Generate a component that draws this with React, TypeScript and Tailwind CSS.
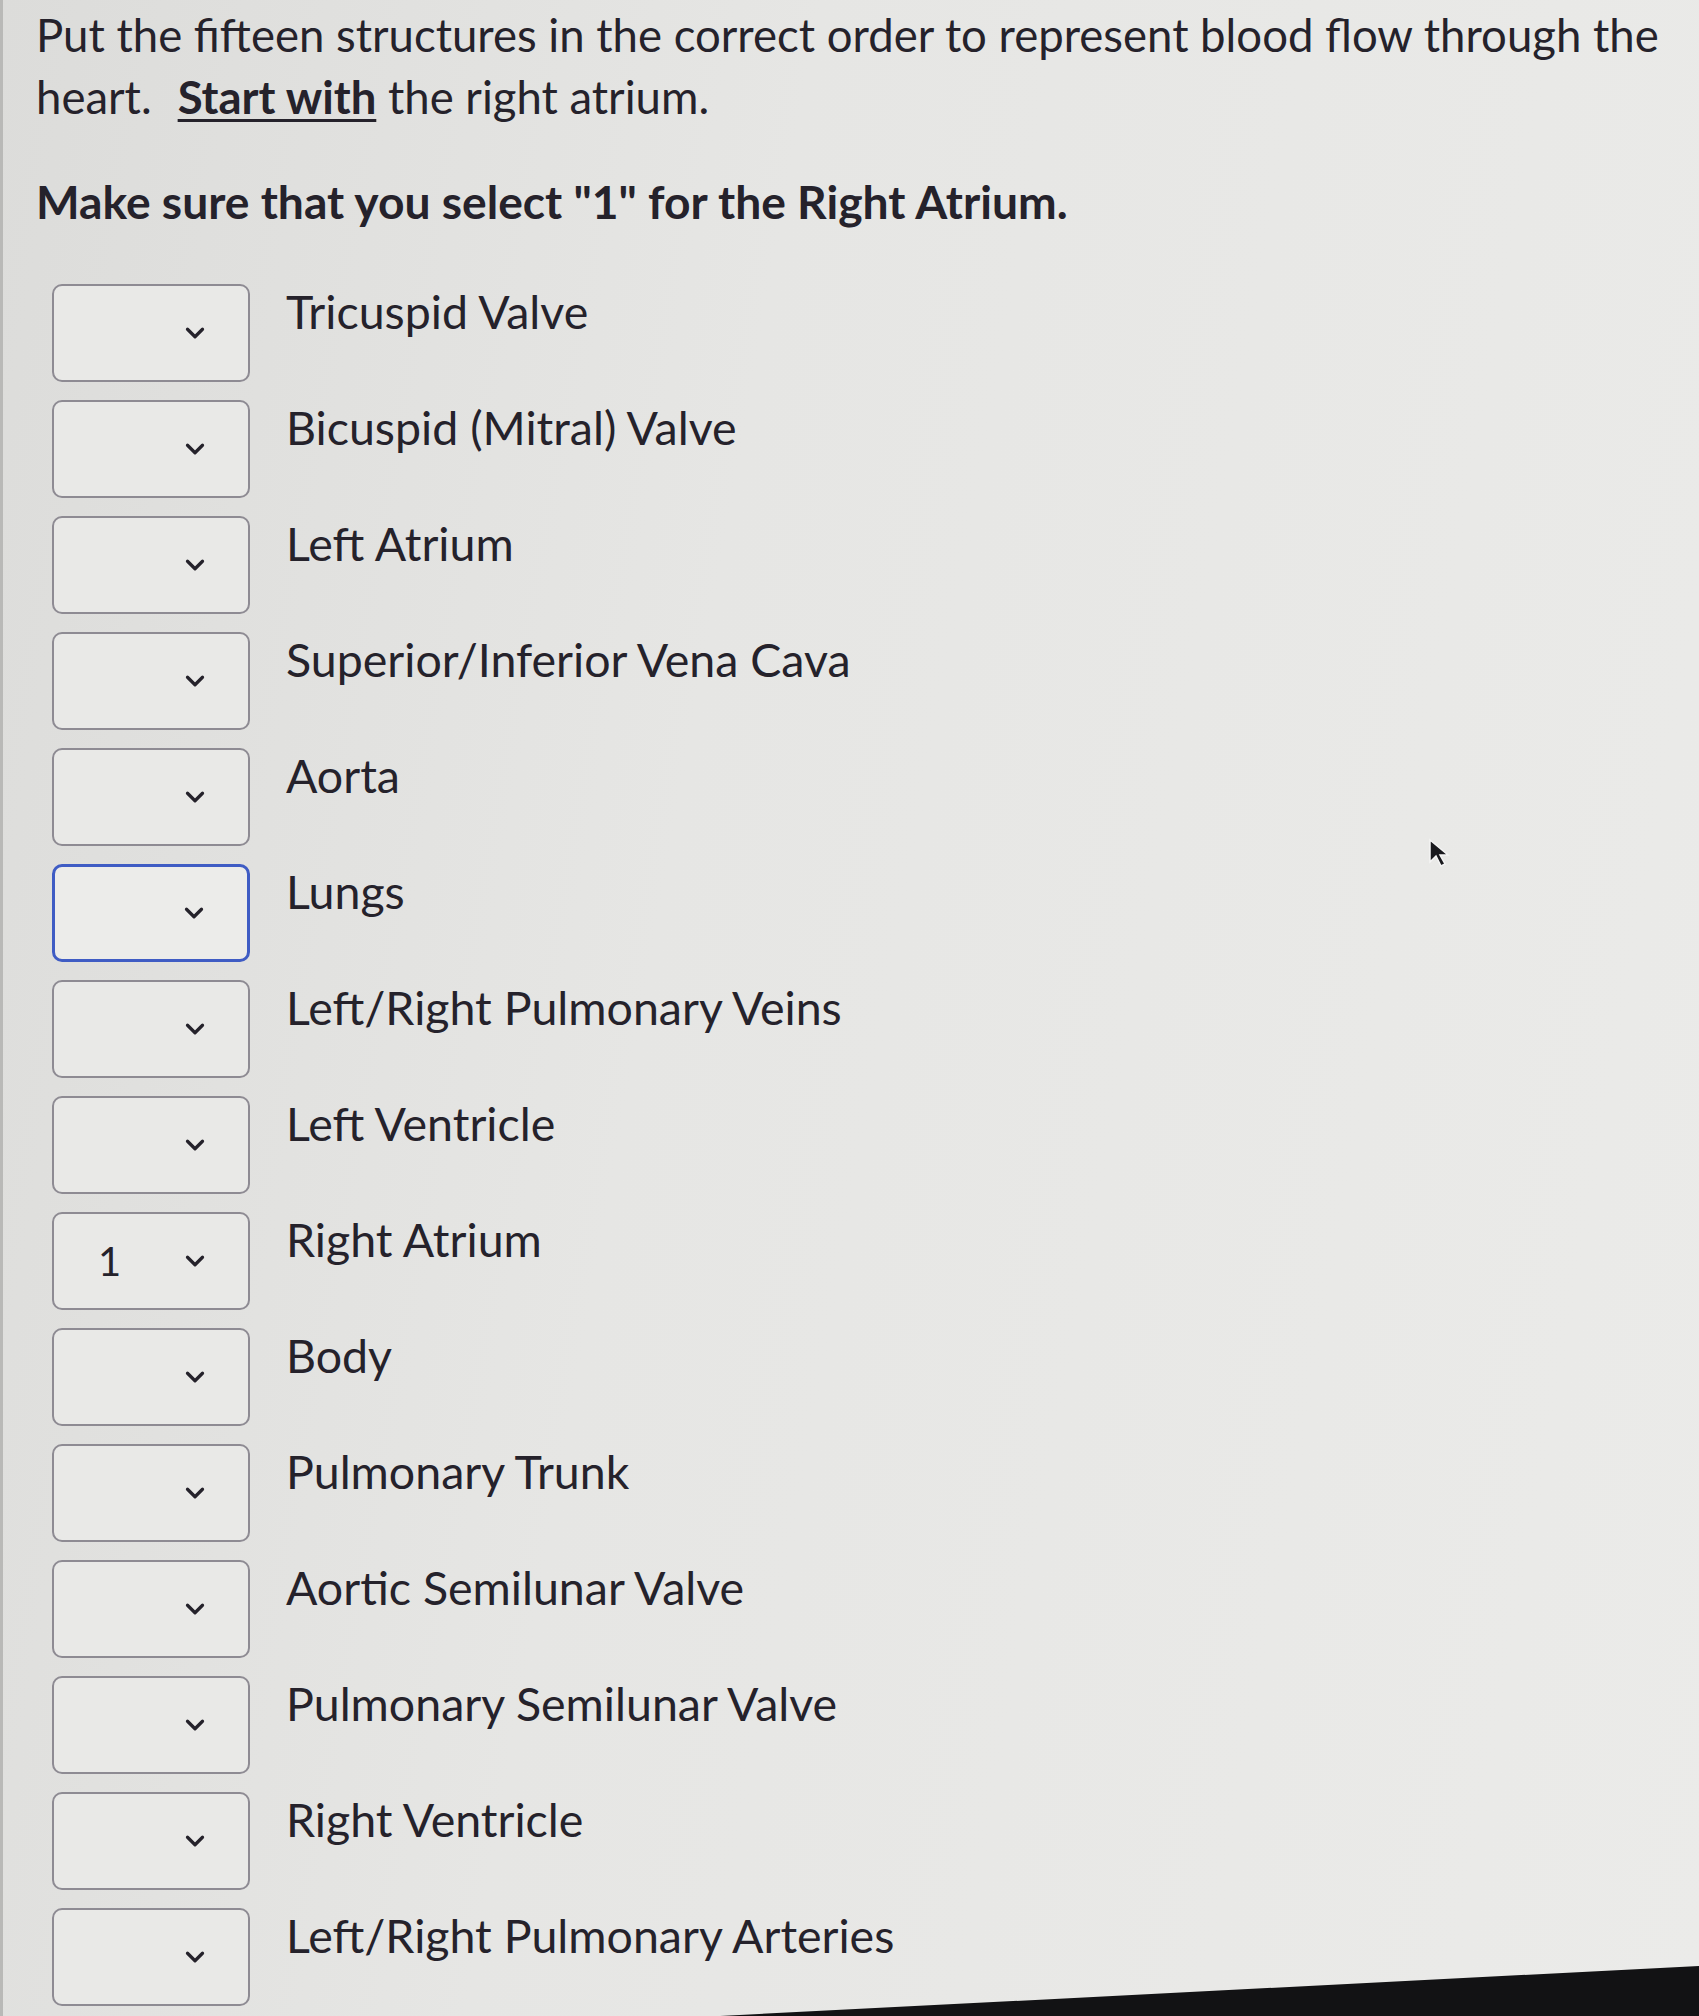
import React from "react";
import { ChevronDown } from "lucide-react";

const items = [
  { label: "Tricuspid Valve" },
  { label: "Bicuspid (Mitral) Valve" },
  { label: "Left Atrium" },
  { label: "Superior/Inferior Vena Cava" },
  { label: "Aorta" },
  { label: "Lungs", focus: true },
  { label: "Left/Right Pulmonary Veins" },
  { label: "Left Ventricle" },
  { label: "Right Atrium", value: "1" },
  { label: "Body" },
  { label: "Pulmonary Trunk" },
  { label: "Aortic Semilunar Valve" },
  { label: "Pulmonary Semilunar Valve" },
  { label: "Right Ventricle" },
  { label: "Left/Right Pulmonary Arteries" },
];

export default function App() {
  return (
    <div
      className="relative w-[1699px] h-[2016px] overflow-hidden bg-[linear-gradient(100deg,#dcdcda_0%,#e6e6e4_40%,#ebebe9_100%)] text-[#25222b]"
      style={{ fontFamily: "Lato, 'Open Sans', sans-serif" }}
    >
      <div className="absolute left-0 top-0 h-full w-[3px] bg-[#b9b9b7]" />
      <div className="pl-[36px] pt-[4px] pr-[10px]">
        <p className="text-[45.5px] leading-[62px] whitespace-nowrap">
          Put the fifteen structures in the correct order to represent blood flow through the
          <br />
          heart.
          <span className="ml-[26px] font-bold underline decoration-[3px] underline-offset-[5px]">Start with</span> the right atrium.
        </p>
        <p className="mt-[42px] text-[46.2px] leading-[62px] font-bold">
          Make sure that you select "1" for the Right Atrium.
        </p>
        <div className="mt-[52px] ml-[16px] flex flex-col gap-[18px]">
          {items.map((it) => (
            <div key={it.label} className="flex items-start gap-[36px]">
              <div
                className={
                  it.focus
                    ? "relative flex h-[98px] w-[198px] shrink-0 items-center rounded-[10px] border-[3px] border-[#3f5cc4] bg-[#ececea]"
                    : "relative flex h-[98px] w-[198px] shrink-0 items-center rounded-[10px] border-2 border-[#8e8b93] bg-[#e9e9e7]"
                }
              >
                {it.value && (
                  <span className="absolute left-[44px] text-[40px] leading-none">{it.value}</span>
                )}
                <ChevronDown
                  className="absolute right-[38px] top-1/2 -translate-y-1/2"
                  size={30}
                  strokeWidth={2.6}
                  color="#25222b"
                />
              </div>
              <div className="pt-[2px] text-[46.5px] leading-[50px] whitespace-nowrap">{it.label}</div>
            </div>
          ))}
        </div>
      </div>

      <svg className="absolute left-[1428px] top-[838px]" width="24" height="32" viewBox="0 0 24 32">
        <path d="M2 2 L2 24 L8 18 L13 28 L17 26 L12 17 L20 17 Z" fill="#1a1a1e" stroke="#f5f5f5" strokeWidth="1.5" />
      </svg>

      <div className="absolute inset-0 bg-[#121214] [clip-path:polygon(720px_2016px,1699px_1966px,1699px_2016px)]" />
    </div>
  );
}
